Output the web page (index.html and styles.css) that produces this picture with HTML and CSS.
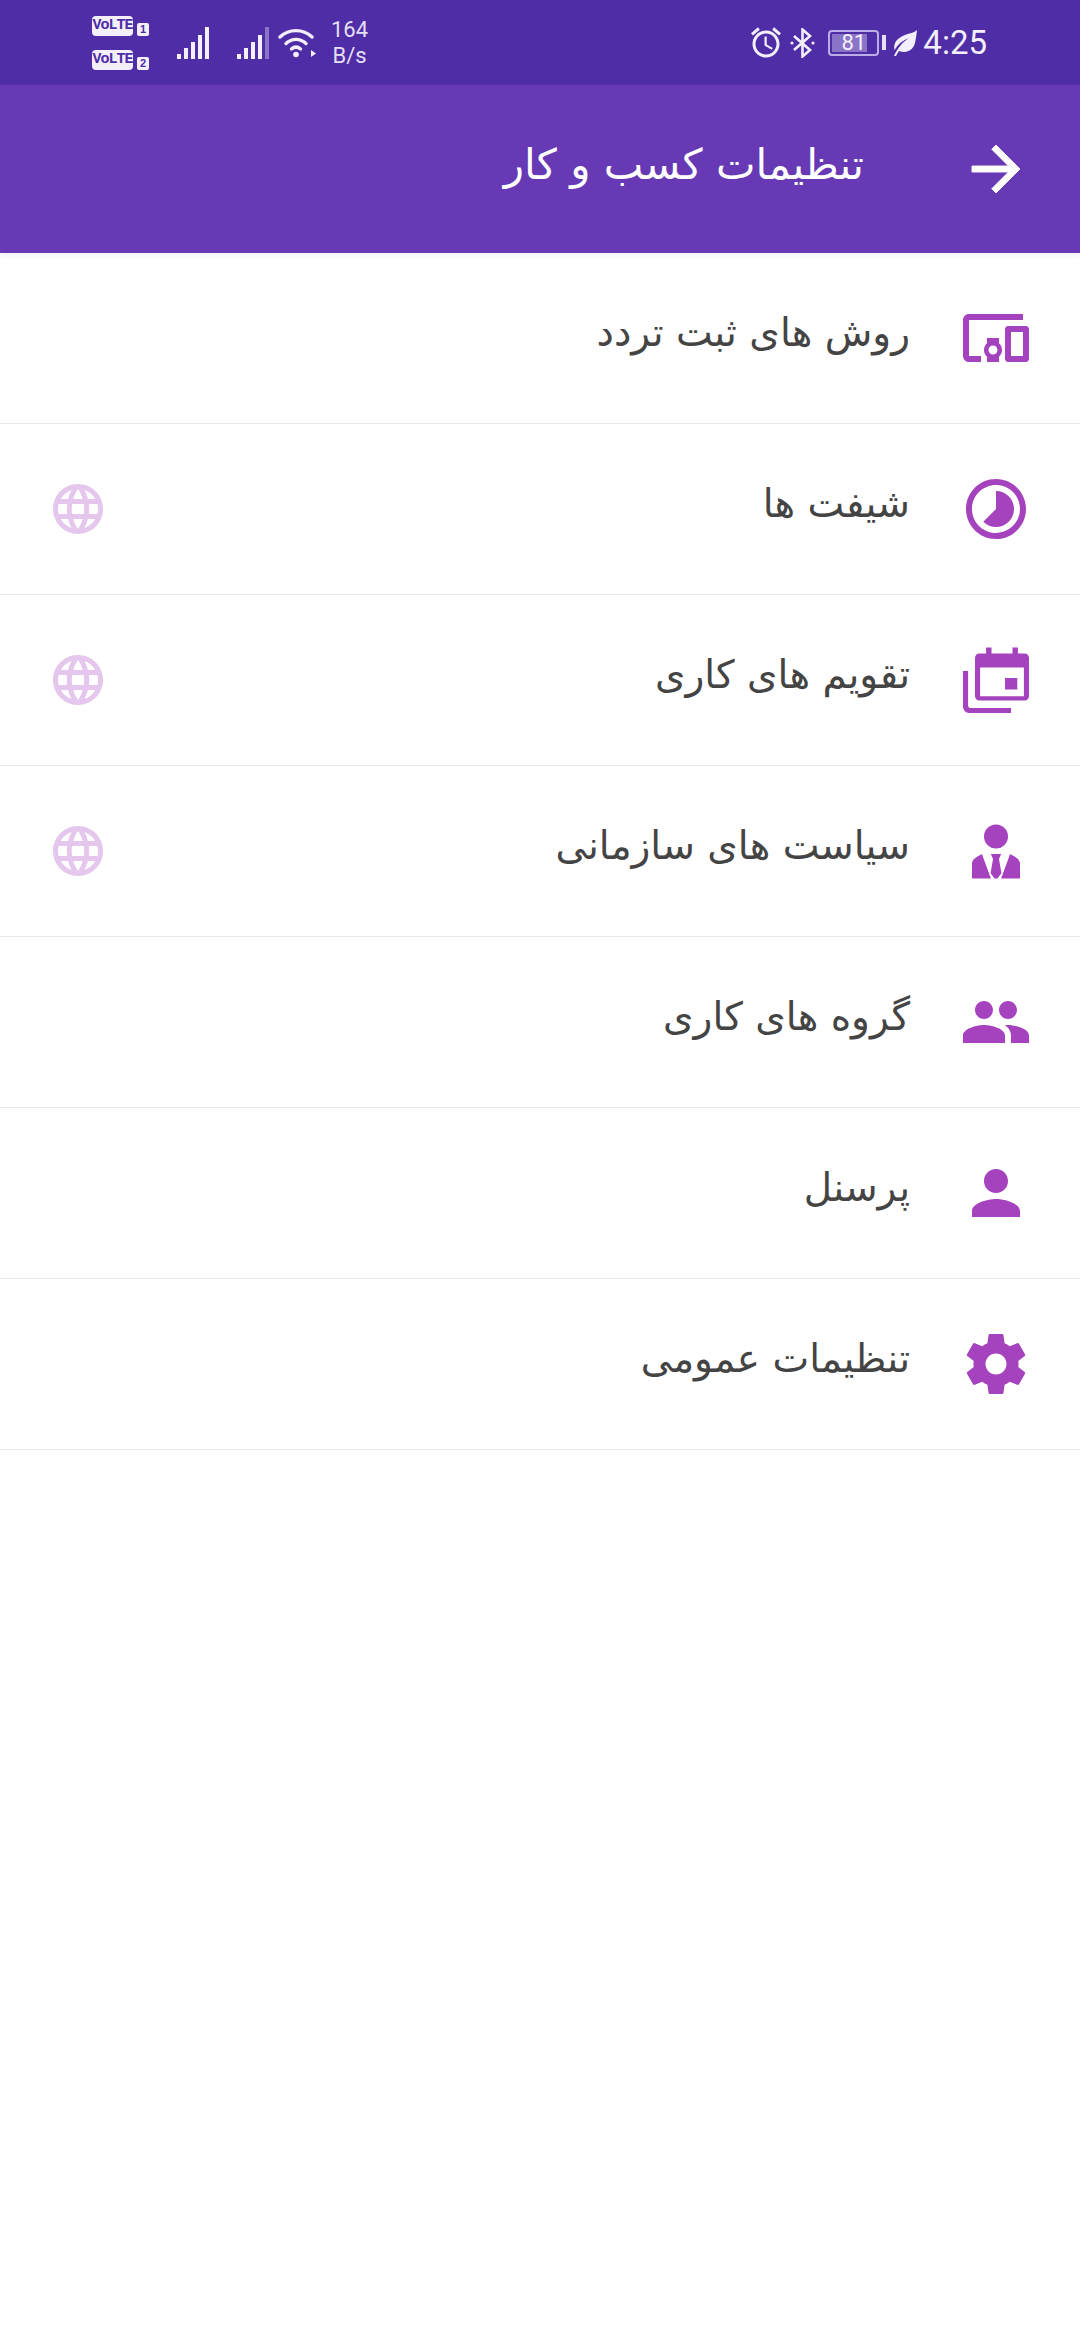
FILE: index.html
```html
<!DOCTYPE html>
<html lang="fa">
<head>
    <meta charset="UTF-8">
    <meta name="viewport" content="width=device-width, initial-scale=1.0">
    <title>تنظیمات کسب و کار</title>
    <link rel="stylesheet" href="styles.css">
</head>
<body>
    <div class="status-bar">
        <div class="status-left">
            <div class="volte-stack">
                <div class="volte-line"><span class="volte">VoLTE</span><span class="sim">1</span></div>
                <div class="volte-line"><span class="volte">VoLTE</span><span class="sim">2</span></div>
            </div>
            <svg class="signal" viewBox="0 0 32 32"><path fill="#f3effb" d="M0 27h4v5H0zM7 21h4v11H7zM14 15h4v17h-4zM21 8h4v24h-4zM28 0h4v32h-4z"/></svg>
            <svg class="signal signal-two" viewBox="0 0 32 32"><path fill="#f3effb" d="M0 27h4v5H0zM7 21h4v11H7zM14 15h4v17h-4zM21 8h4v24h-4z"/><path fill="#8a74c8" d="M28 0h4v32h-4z"/></svg>
            <svg class="wifi" viewBox="0 0 38 30" fill="none" stroke="#f3effb" stroke-width="3.4" stroke-linecap="round">
                <path d="M2 9c9-8.500 23-8.500 32 0"/>
                <path d="M8 15.500c6-5.500 14-5.500 20 0"/>
                <path d="M13.500 21c3-2.500 6-2.500 9 0"/>
                <circle cx="18" cy="26.500" r="2.800" fill="#f3effb" stroke="none"/>
                <path d="M33 22l5 3.500-5 3.500z" fill="#f3effb" stroke="none"/>
            </svg>
            <div class="speed"><span>164</span><span>B/s</span></div>
        </div>
        <div class="status-right">
            <svg class="alarm" viewBox="2 1.800 20 20.300"><path fill="#f3effb" d="M22 5.720l-4.600-3.860-1.290 1.530 4.600 3.860L22 5.720zM7.880 3.390L6.600 1.860 2 5.710l1.290 1.530 4.590-3.850zM12.500 8H11v6l4.750 2.850.75-1.230-4-2.370V8zM12 4c-4.970 0-9 4.030-9 9s4.030 9 9 9 9-4.030 9-9-4.030-9-9-9zm0 16c-3.870 0-7-3.130-7-7s3.130-7 7-7 7 3.130 7 7-3.130 7-7 7z"/></svg>
            <svg class="bluetooth" viewBox="0 0 25 30" fill="none" stroke="#f3effb" stroke-width="2.600"><path d="M4 8l16 14-7.500 6.500v-27L20 8 4 22"/><circle cx="2" cy="15" r="1.600" fill="#f3effb" stroke="none"/><circle cx="23" cy="15" r="1.600" fill="#f3effb" stroke="none"/></svg>
            <div class="battery">
                <div class="battery-body"><div class="battery-fill" style="width: 81%"></div><span class="battery-num">81</span></div>
                <div class="battery-tip"></div>
            </div>
            <svg class="leaf" viewBox="0 0 24 26"><path fill="#f3effb" d="M24 0C22 2.500 17 3 12 5 4 8 0 13 1.500 20 5 14 10 10 16 8 10 12 5 17 1 26l2 0c1-2 2-3.500 3-5 8 3 14-1 16-8 1-4 1.500-9 2-13z"/></svg>
            <span class="clock">4:25</span>
        </div>
    </div>

    <div class="app-bar">
        <span class="app-title">تنظیمات کسب و کار</span>
        <svg class="icon back-icon" viewBox="0 0 24 24"><path d="M12 4l-1.410 1.410L16.170 11H4v2h12.170l-5.580 5.590L12 20l8-8z"/></svg>
    </div>

    <div class="menu" dir="rtl">
        <div class="menu-row">
            <svg class="icon row-icon" viewBox="0 0 24 24"><path d="M3 6h18V4H3c-1.100 0-2 .9-2 2v12c0 1.100.9 2 2 2h4v-2H3V6zm10 6H9v1.780c-.61.55-1 1.330-1 2.220s.39 1.670 1 2.220V20h4v-1.780c.61-.55 1-1.340 1-2.220s-.39-1.670-1-2.220V12zm-2 5.500c-.83 0-1.500-.67-1.500-1.500s.67-1.500 1.500-1.500 1.500.67 1.500 1.500-.67 1.500-1.500 1.500zM22 8h-6c-.5 0-1 .5-1 1v10c0 .5.5 1 1 1h6c.5 0 1-.5 1-1V9c0-.5-.5-1-1-1zm-1 10h-4v-8h4v8z"/></svg>
            <span class="row-label">روش های ثبت تردد</span>
        </div>
        <div class="menu-row">
            <svg class="icon row-icon" viewBox="0 0 24 24"><path d="M16.240 7.760C15.070 6.590 13.540 6 12 6v6l-4.240 4.240c2.340 2.340 6.140 2.340 8.490 0 2.340-2.340 2.340-6.140-.01-8.480zM12 2C6.480 2 2 6.480 2 12s4.480 10 10 10 10-4.480 10-10S17.520 2 12 2zm0 18c-4.420 0-8-3.580-8-8s3.580-8 8-8 8 3.580 8 8-3.580 8-8 8z"/></svg>
            <span class="row-label">شیفت ها</span>
            <svg class="globe" viewBox="0 0 24 24"><path d="M11.990 2C6.470 2 2 6.480 2 12s4.470 10 9.990 10C17.520 22 22 17.520 22 12S17.520 2 11.990 2zm6.930 6h-2.950c-.32-1.250-.78-2.450-1.380-3.560 1.840.63 3.370 1.910 4.330 3.560zM12 4.040c.83 1.200 1.480 2.530 1.910 3.960h-3.820c.43-1.430 1.080-2.760 1.910-3.960zM4.260 14C4.100 13.360 4 12.690 4 12s.1-1.360.26-2h3.380c-.08.66-.14 1.320-.14 2 0 .68.06 1.340.14 2H4.260zm.82 2h2.950c.32 1.250.78 2.450 1.380 3.560-1.840-.63-3.370-1.900-4.330-3.560zm2.950-8H5.080c.96-1.660 2.490-2.930 4.330-3.560C8.810 5.550 8.350 6.750 8.030 8zM12 19.960c-.83-1.200-1.480-2.530-1.910-3.960h3.820c-.43 1.430-1.080 2.760-1.910 3.960zM14.340 14H9.660c-.09-.66-.16-1.320-.16-2 0-.68.07-1.350.16-2h4.680c.09.65.16 1.320.16 2 0 .68-.07 1.340-.16 2zm.25 5.560c.6-1.110 1.060-2.310 1.380-3.560h2.950c-.96 1.650-2.490 2.930-4.330 3.560zM16.360 14c.08-.66.14-1.320.14-2 0-.68-.06-1.340-.14-2h3.380c.16.64.26 1.310.26 2s-.1 1.360-.26 2h-3.380z"/></svg>
        </div>
        <div class="menu-row">
            <svg class="icon row-icon" viewBox="0 0 24 24"><path fill-rule="evenodd" d="M7 3.200h1.700V1.200h1.800v2h7v-2h1.800v2H21.500c.9 0 1.500.7 1.500 1.500v12.600c0 .8-.6 1.500-1.500 1.500h-15c-.9 0-1.500-.7-1.500-1.500V4.700c0-.8.6-1.500 1.500-1.500zM6.700 7.800v9.600h14.600V7.800zM15 11.300h4.100v3.900H15zM1 9h1.700v11.600c0 .4.300.7.700.7H17V23H3.200C2 23 1 22 1 20.800z"/></svg>
            <span class="row-label">تقویم های کاری</span>
            <svg class="globe" viewBox="0 0 24 24"><path d="M11.990 2C6.470 2 2 6.480 2 12s4.470 10 9.990 10C17.520 22 22 17.520 22 12S17.520 2 11.990 2zm6.930 6h-2.950c-.32-1.250-.78-2.450-1.380-3.560 1.840.63 3.370 1.910 4.330 3.560zM12 4.040c.83 1.200 1.480 2.530 1.910 3.960h-3.820c.43-1.430 1.080-2.760 1.910-3.960zM4.260 14C4.100 13.360 4 12.690 4 12s.1-1.360.26-2h3.380c-.08.66-.14 1.320-.14 2 0 .68.06 1.340.14 2H4.260zm.82 2h2.950c.32 1.250.78 2.450 1.380 3.560-1.840-.63-3.370-1.900-4.330-3.560zm2.950-8H5.080c.96-1.660 2.490-2.930 4.330-3.560C8.810 5.550 8.350 6.750 8.030 8zM12 19.960c-.83-1.200-1.480-2.530-1.910-3.960h3.820c-.43 1.430-1.080 2.760-1.910 3.960zM14.340 14H9.660c-.09-.66-.16-1.320-.16-2 0-.68.07-1.350.16-2h4.680c.09.65.16 1.320.16 2 0 .68-.07 1.340-.16 2zm.25 5.560c.6-1.110 1.060-2.310 1.380-3.560h2.950c-.96 1.650-2.490 2.930-4.330 3.560zM16.360 14c.08-.66.14-1.320.14-2 0-.68-.06-1.340-.14-2h3.380c.16.64.26 1.310.26 2s-.1 1.360-.26 2h-3.380z"/></svg>
        </div>
        <div class="menu-row">
            <svg class="icon row-icon" viewBox="0 0 24 24"><circle cx="12" cy="7.200" r="4"/><path d="M4 21.200v-4.800c0-1.300.7-2 3.300-3.400l3 8.200zM20 21.200v-4.800c0-1.300-.7-2-3.300-3.400l-3 8.200zM10.300 13h3.400l-.7 1.700.8 4.700-1.300 1.800h-1l-1.300-1.800.8-4.700z"/></svg>
            <span class="row-label">سیاست های سازمانی</span>
            <svg class="globe" viewBox="0 0 24 24"><path d="M11.990 2C6.470 2 2 6.480 2 12s4.470 10 9.990 10C17.520 22 22 17.520 22 12S17.520 2 11.990 2zm6.930 6h-2.950c-.32-1.250-.78-2.450-1.380-3.560 1.840.63 3.370 1.910 4.330 3.560zM12 4.040c.83 1.200 1.480 2.530 1.910 3.960h-3.820c.43-1.430 1.080-2.760 1.910-3.960zM4.260 14C4.100 13.360 4 12.690 4 12s.1-1.360.26-2h3.380c-.08.66-.14 1.320-.14 2 0 .68.06 1.340.14 2H4.260zm.82 2h2.950c.32 1.250.78 2.450 1.380 3.560-1.840-.63-3.370-1.900-4.330-3.560zm2.950-8H5.080c.96-1.660 2.490-2.930 4.330-3.560C8.810 5.550 8.350 6.750 8.030 8zM12 19.960c-.83-1.200-1.480-2.530-1.910-3.960h3.820c-.43 1.430-1.080 2.760-1.910 3.960zM14.340 14H9.660c-.09-.66-.16-1.320-.16-2 0-.68.07-1.350.16-2h4.680c.09.65.16 1.320.16 2 0 .68-.07 1.340-.16 2zm.25 5.560c.6-1.110 1.060-2.310 1.380-3.560h2.950c-.96 1.650-2.490 2.930-4.330 3.560zM16.360 14c.08-.66.14-1.320.14-2 0-.68-.06-1.340-.14-2h3.380c.16.64.26 1.310.26 2s-.1 1.360-.26 2h-3.380z"/></svg>
        </div>
        <div class="menu-row">
            <svg class="icon row-icon" viewBox="0 0 24 24"><path d="M16 11c1.660 0 2.990-1.340 2.990-3S17.660 5 16 5c-1.660 0-3 1.340-3 3s1.340 3 3 3zm-8 0c1.660 0 2.990-1.340 2.990-3S9.660 5 8 5C6.340 5 5 6.340 5 8s1.340 3 3 3zm0 2c-2.330 0-7 1.170-7 3.500V19h14v-2.500c0-2.330-4.670-3.500-7-3.500zm8 0c-.29 0-.62.02-.97.05 1.160.84 1.970 1.970 1.970 3.450V19h6v-2.500c0-2.330-4.670-3.500-7-3.500z"/></svg>
            <span class="row-label">گروه های کاری</span>
        </div>
        <div class="menu-row">
            <svg class="icon row-icon" viewBox="0 0 24 24"><path d="M12 12c2.210 0 4-1.790 4-4s-1.790-4-4-4-4 1.790-4 4 1.790 4 4 4zm0 2c-2.670 0-8 1.340-8 4v2h16v-2c0-2.660-5.330-4-8-4z"/></svg>
            <span class="row-label">پرسنل</span>
        </div>
        <div class="menu-row">
            <svg class="icon row-icon" viewBox="0 0 24 24"><path d="M19.430 12.980c.04-.32.07-.64.07-.98s-.03-.66-.07-.98l2.110-1.650c.19-.15.24-.42.12-.64l-2-3.460c-.12-.22-.39-.3-.61-.22l-2.490 1c-.52-.4-1.080-.73-1.690-.98l-.38-2.650C14.460 2.180 14.250 2 14 2h-4c-.25 0-.46.18-.49.42l-.38 2.650c-.61.25-1.170.59-1.690.98l-2.490-1c-.23-.09-.49 0-.61.22l-2 3.460c-.13.22-.07.49.12.64l2.110 1.650c-.04.32-.07.65-.07.98s.03.66.07.98l-2.110 1.650c-.19.15-.24.42-.12.64l2 3.460c.12.22.39.3.61.22l2.490-1c.52.4 1.080.73 1.690.98l.38 2.650c.03.24.24.42.49.42h4c.25 0 .46-.18.49-.42l.38-2.650c.61-.25 1.170-.59 1.690-.98l2.490 1c.23.09.49 0 .61-.22l2-3.460c.12-.22.07-.49-.12-.64l-2.110-1.650zM12 15.500c-1.930 0-3.500-1.570-3.500-3.500s1.570-3.500 3.500-3.500 3.500 1.570 3.500 3.500-1.570 3.500-3.500 3.500z"/></svg>
            <span class="row-label">تنظیمات عمومی</span>
        </div>
    </div>
</body>
</html>
```

FILE: styles.css
```css
body {
    margin: 0;
    background: #fff;
    font-family: "DejaVu Sans", "Noto Sans", sans-serif;
}
.status-bar {
    height: 85px;
    padding: 0 93px 0 92px;
    display: flex;
    justify-content: space-between;
    align-items: center;
    background: #4f2da6;
    color: #f3effb;
    font-family: Roboto, sans-serif;
}
.status-left, .status-right {
    display: flex;
    align-items: center;
}
.volte-stack {
    display: flex;
    flex-direction: column;
    gap: 14px;
    width: 57px;
}
.volte-line {
    display: flex;
    align-items: flex-end;
    gap: 4px;
}
.volte {
    width: 41px;
    height: 20px;
    border-radius: 4px;
    background: #f3effb;
    color: #4f2da6;
    font: bold 15px/20px "Liberation Mono", monospace;
    text-align: center;
    letter-spacing: -1px;
}
.sim {
    width: 12px;
    height: 13px;
    border-radius: 2px;
    background: #f3effb;
    color: #4f2da6;
    font: bold 11px/13px "Liberation Sans", sans-serif;
    text-align: center;
}
.signal {
    width: 32px;
    height: 32px;
    margin: 0 0 0 28px;
}
.signal-two {
    margin-left: 28px;
}
.wifi {
    width: 38px;
    height: 30px;
    margin-left: 9px;
}
.speed {
    display: flex;
    flex-direction: column;
    align-items: center;
    margin-left: 15px;
    font-size: 22px;
    line-height: 26px;
    color: #e6dff5;
}
.alarm {
    width: 30px;
    height: 31px;
}
.bluetooth {
    width: 25px;
    height: 30px;
    margin-left: 9px;
}
.battery {
    display: flex;
    align-items: center;
    gap: 3px;
    margin-left: 13px;
}
.battery-body {
    position: relative;
    box-sizing: border-box;
    width: 51px;
    height: 26px;
    border: 2px solid #bcaee4;
    border-radius: 4px;
    padding: 2px;
}
.battery-fill {
    height: 100%;
    background: #8a74c8;
}
.battery-num {
    position: absolute;
    top: 0;
    left: 0;
    right: 0;
    text-align: center;
    font-size: 22px;
    line-height: 22px;
    color: #f3effb;
}
.battery-tip {
    width: 4px;
    height: 15px;
    background: #e6dff5;
}
.leaf {
    width: 24px;
    height: 26px;
    margin-left: 7px;
}
.clock {
    margin-left: 6px;
    font-size: 33px;
    line-height: 40px;
}
.app-bar {
    height: 168px;
    padding-right: 48px;
    display: flex;
    justify-content: flex-end;
    align-items: center;
    gap: 96px;
    background: #6739b4;
    box-shadow: 0 3px 6px rgba(0,0,0,0.05);
    position: relative;
}
.app-title {
    padding-bottom: 10px;
    font-size: 42px;
    color: #fff;
}
.icon {
    width: 72px;
    height: 72px;
    flex: none;
}
.back-icon path {
    fill: #fff;
    stroke: #fff;
    stroke-width: 0.3;
}
.row-icon {
    fill: #a542bd;
}
.menu-row {
    box-sizing: border-box;
    height: 171px;
    padding: 0 48px;
    display: flex;
    align-items: center;
    gap: 50px;
    border-bottom: 1px solid #e8e8e8;
}
.row-label {
    padding-bottom: 12px;
    font-size: 39px;
    color: #444;
}
.globe {
    width: 60px;
    height: 60px;
    margin-right: auto;
    fill: #e5c6ec;
}
```
